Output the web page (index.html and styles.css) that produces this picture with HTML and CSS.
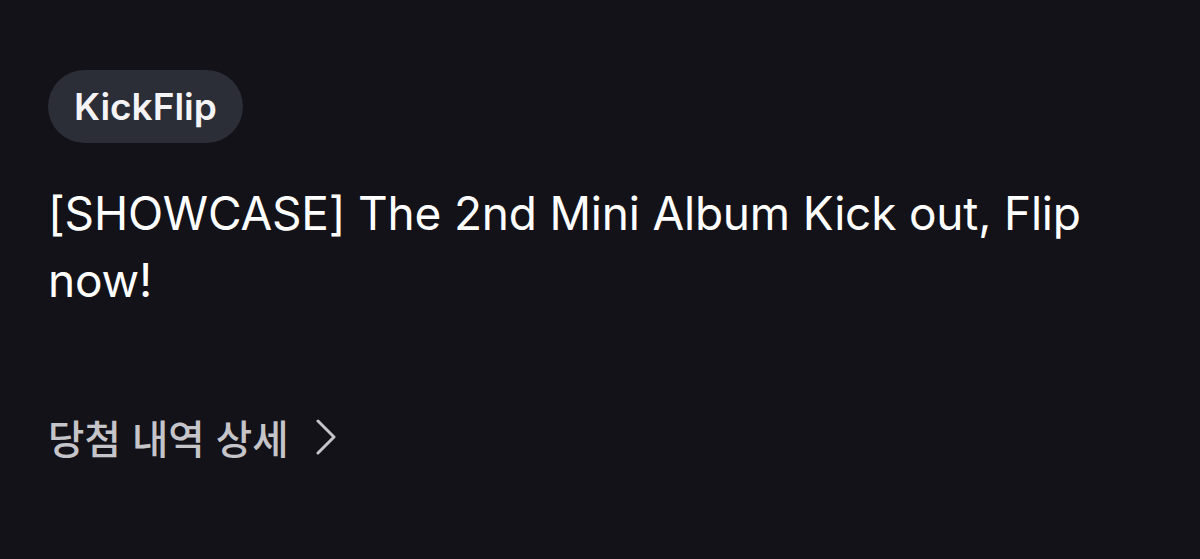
FILE: index.html
```html
<!DOCTYPE html>
<html lang="ko">
<head>
<meta charset="utf-8">
<link rel="stylesheet" href="styles.css">
</head>
<body>
<main class="card">
  <span class="chip">KickFlip</span>
  <h1 class="title">[SHOWCASE] The 2nd Mini Album Kick out, Flip now!</h1>
  <a class="detail" href="#">
    <span class="detail-text">당첨 내역 상세</span>
    <svg class="chev" width="22" height="36" viewBox="0 0 22 36" aria-hidden="true">
      <path d="M3 2 L19 18 L3 34" fill="none" stroke="currentColor" stroke-width="3" stroke-linecap="round" stroke-linejoin="round"/>
    </svg>
  </a>
</main>
</body>
</html>
```

FILE: styles.css
```css
html, body {
  margin: 0;
  padding: 0;
  background: #131218;
  height: 100%;
}
body {
  font-family: Inter, "Noto Sans CJK KR", sans-serif;
  color: #ffffff;
}
.card {
  display: flex;
  flex-direction: column;
  align-items: flex-start;
  padding: 70px 48px 0 48px;
}
.chip {
  display: inline-flex;
  align-items: center;
  height: 73px;
  padding: 0 26px;
  border-radius: 37px;
  background: #2b2d37;
  color: #f4f4f6;
  font-weight: 600;
  font-size: 37px;
  box-sizing: border-box;
}
.title {
  margin: 37px 0 0 0;
  font-weight: 400;
  font-size: 46px;
  line-height: 67px;
  max-width: 1080px;
  letter-spacing: -0.2px;
}
.detail {
  display: flex;
  align-items: center;
  gap: 26px;
  margin-top: 94px;
  color: #c4c4c9;
  text-decoration: none;
}
.detail-text {
  font-family: "Noto Sans CJK KR", sans-serif;
  font-size: 39.6px;
  font-weight: 500;
}
.chev {
  display: block;
}
```
